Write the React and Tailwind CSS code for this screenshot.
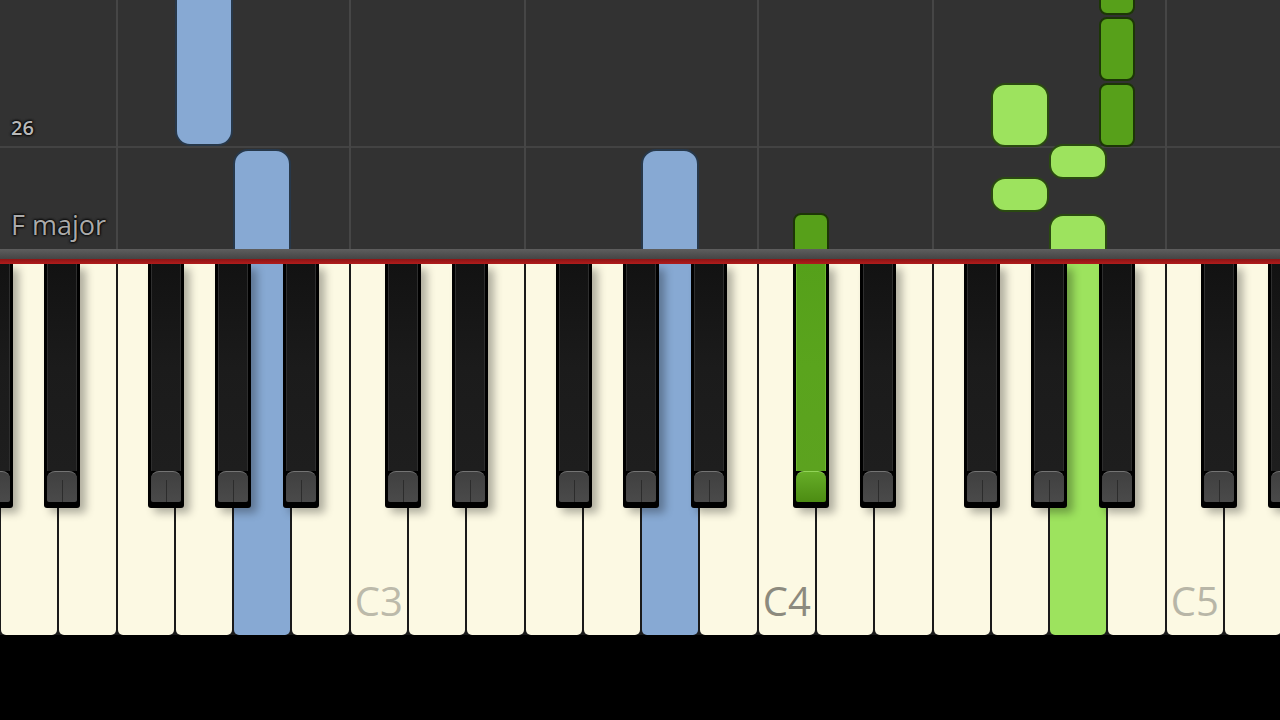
import React from "react";

const W = 408 / 7; // white key width

const WHITES = [
  "D2","E2","F2","G2","A2","B2",
  "C3","D3","E3","F3","G3","A3","B3",
  "C4","D4","E4","F4","G4","A4","B4",
  "C5","D5",
];

const PRESSED_WHITE = {
  A2: "bg-[#87a9d3]",
  A3: "bg-[#87a9d3]",
  A4: "bg-[#9de35e]",
};

const LABELS = {
  C3: "text-[#bcbaaa]",
  C4: "text-[#8c8a7e]",
  C5: "text-[#b8b6a7]",
};

const C_POS = [-W * 7 + 349.71, 349.71, 757.71, 1165.71];
const BLACK_OFF = [35.3, 102.3, 206.3, 273.3, 341.3];

const blackKeys = [];
C_POS.forEach((c, oi) => {
  BLACK_OFF.forEach((o, bi) => {
    const left = c + o;
    if (left < 1280 && left + 36 > 0) {
      blackKeys.push({ left, pressed: oi === 2 && bi === 0 });
    }
  });
});

const V_LINES = [116.57, 349.71, 524.57, 757.71, 932.57, 1165.71];

// notes: [left, width, top, height, kind]
const NOTES = [
  [174.9, 58.3, -40, 186, "blue"],
  [233.2, 58.3, 149, 120, "blue"],
  [641.2, 58.3, 149, 120, "blue"],
  [793.2, 35.8, 213, 60, "dark"],
  [1099.2, 35.8, -30, 44.5, "dark"],
  [1099.2, 35.8, 16.5, 64.5, "dark"],
  [1099.2, 35.8, 82.5, 64, "dark"],
  [990.9, 58.3, 83, 63.5, "light"],
  [990.9, 58.3, 177, 34.5, "light"],
  [1049.2, 58.3, 144, 34.5, "light"],
  [1049.2, 58.3, 214, 60, "light"],
];

const NOTE_CLASS = {
  blue: "bg-[#87a9d3] border-2 border-[#27384a] rounded-[15px]",
  light: "bg-[#9de35e] border-2 border-[#2a4a10] rounded-[14px]",
  dark: "bg-[#57a01a] border-2 border-[#1c3606] rounded-[8px]",
};

function BlackKey({ left, pressed }) {
  return (
    <div
      className="absolute top-0 h-[244px] w-[36px] rounded-b-[3px] bg-black px-[3px] pb-[6px] shadow-[6px_5px_9px_rgba(0,0,0,0.3)]"
      style={{ left }}
    >
      <div className="flex h-full flex-col overflow-hidden rounded-b-[2px]">
        {pressed ? (
          <>
            <div className="flex-1 border-x border-[#6fb830] bg-gradient-to-b from-[#55a01a] via-[#5aa41d] to-[#5ca21f]" />
            <div className="relative h-[31px] rounded-t-[8px] border-t border-[#92d458] bg-gradient-to-b from-[#66ad27] to-[#4c8c12]" />
          </>
        ) : (
          <>
            <div className="flex-1 border-x border-[#2e2e2e] bg-gradient-to-b from-[#121212] via-[#1b1b1b] to-[#1e1e1e]" />
            <div className="relative h-[31px] rounded-t-[8px] border-t border-[#747474] bg-gradient-to-b from-[#404040] to-[#4a4a4a]">
              <div className="absolute bottom-0 left-1/2 top-[8px] w-px bg-[#2c2c2c]" />
            </div>
          </>
        )}
      </div>
    </div>
  );
}

function WhiteKey({ name }) {
  const bg = PRESSED_WHITE[name] || "bg-[#fcf9e3]";
  const label = LABELS[name];
  return (
    <div className="h-full w-[58.2857px] flex-none px-px">
      <div className={`flex h-full items-end justify-center rounded-b-[5px] pb-[14px] ${bg}`}>
        {label && (
          <span className={`text-[40px] leading-none ${label}`}>{name}</span>
        )}
      </div>
    </div>
  );
}

export default function App() {
  return (
    <div
      className="flex h-[720px] w-[1280px] flex-col overflow-hidden bg-black"
      style={{ fontFamily: '"Open Sans", "DejaVu Sans", sans-serif' }}
    >
      {/* piano roll */}
      <div className="relative h-[249px] flex-none overflow-hidden bg-[#323232]">
        <div className="absolute left-0 right-0 top-[146px] h-[2px] bg-[#434343]" />
        {V_LINES.map((x) => (
          <div
            key={x}
            className="absolute bottom-0 top-0 w-[2px] bg-[#464646]"
            style={{ left: x - 1 }}
          />
        ))}
        {NOTES.map(([l, w, t, h, k], i) => (
          <div
            key={i}
            className={`absolute ${NOTE_CLASS[k]}`}
            style={{ left: l, width: w, top: t, height: h }}
          />
        ))}
        <div className="absolute left-[11px] top-[118px] text-[20px] font-semibold leading-none text-[#b8b8b8] [text-shadow:0_0_3px_#000,0_0_3px_#000,0_0_2px_#000]">
          26
        </div>
        <div className="absolute left-[11px] top-[211px] text-[27px] leading-none text-[#aaaaaa] [text-shadow:0_0_3px_#000,0_0_3px_#000,0_0_2px_#000]">
          F major
        </div>
      </div>

      {/* top rail */}
      <div className="h-[10px] flex-none bg-gradient-to-b from-[#5e5e5e] to-[#454545]" />
      <div className="h-[5px] flex-none bg-gradient-to-b from-[#8e1414] to-[#b01c1c]" />

      {/* keyboard */}
      <div className="relative flex h-[371px] flex-none overflow-hidden bg-[#1a1a1a]">
        {WHITES.map((n) => (
          <WhiteKey key={n} name={n} />
        ))}
        {blackKeys.map((b, i) => (
          <BlackKey key={i} left={b.left} pressed={b.pressed} />
        ))}
      </div>

      <div className="flex-1 bg-black" />
    </div>
  );
}
